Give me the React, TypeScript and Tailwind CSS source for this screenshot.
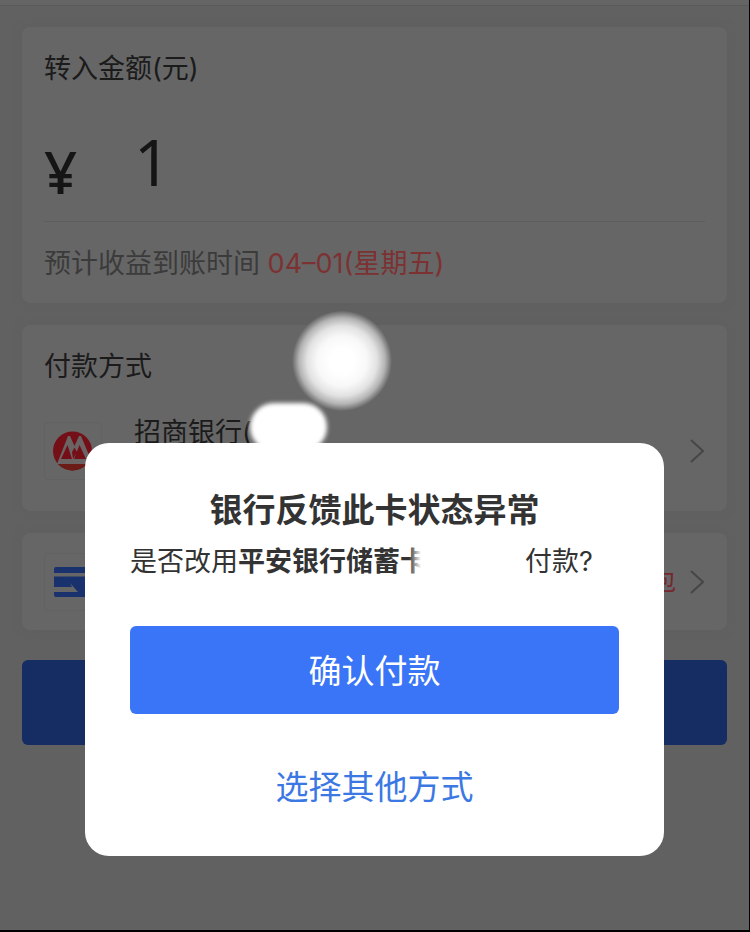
import { type ReactNode } from "react";

interface CardProps {
  className?: string;
  children: ReactNode;
}

function Card({ className = "", children }: CardProps) {
  return (
    <section className={`rounded-lg bg-[#666666] px-[22px] shadow-[0_0_8px_#5f5f5f] ${className}`}>
      {children}
    </section>
  );
}

function Chevron() {
  return (
    <svg viewBox="0 0 16 26" className="h-[26px] w-4 shrink-0" fill="none" stroke="#464646" strokeWidth="2">
      <path d="M2 2 L14 13 L2 24" />
    </svg>
  );
}

function MerchantsLogo() {
  return (
    <svg viewBox="0 0 40 40" className="size-10">
      <circle cx="19.5" cy="20" r="19.5" fill="#740f18" />
      <path d="M4 33 L15 5 H17 L21.5 15 L26 5 H28 L38 29 L37 33 Z" fill="#6a6464" />
      <path d="M8 28 L14.5 14 L19 28 Z M21 28 L26.5 14 L33 28 Z M19 21 L21.5 16.5 L24 21 L20 28 Z" fill="#740f18" />
      <path d="M5 33 H34 A19.5 19.5 0 0 1 5 33 Z" fill="#6b1c16" />
    </svg>
  );
}

function CardLogo() {
  return (
    <svg viewBox="0 0 38 30" className="h-[30px] w-[38px]">
      <rect width="38" height="30" rx="2" fill="#19316d" />
      <path d="M0 6 H38 V9.5 H0 Z M0 20 H18 L16 16 L24 25 H0 Z" fill="#666666" />
    </svg>
  );
}

function LogoBox({ children }: { children: ReactNode }) {
  return (
    <div className="flex size-[58px] shrink-0 items-center justify-center rounded border border-[#626262]">
      {children}
    </div>
  );
}

export default function App() {
  return (
    <div className="relative min-h-screen overflow-hidden border-r border-b-2 border-black bg-[#616161] font-['Inter','Noto_Sans_CJK_SC',sans-serif] text-[27px] leading-10 text-[#1b1b1b]">
      <div className="h-[6px] border-b border-[#5a5a5a] bg-[#656565]" />

      <main className="flex flex-col gap-[22px] px-[22px] pt-[21px]">
        <Card className="pt-[22px] pb-[19px]">
          <label htmlFor="amount" className="block">转入金额(元)</label>
          <div className="mt-8 flex h-[101px] items-start border-b border-[#5d5d5d] font-['Noto_Sans','Noto_Sans_CJK_SC',sans-serif]">
            <span className="mt-4 w-[90px] text-[58px] leading-[70px] font-medium text-[#151515]">¥</span>
            <input
              id="amount"
              defaultValue="1"
              inputMode="decimal"
              className="h-20 min-w-0 flex-1 bg-transparent text-[64px] text-[#151515] outline-none"
            />
          </div>
          <p className="mt-[22px] text-[#3b3b3b]">
            预计收益到账时间 <span className="text-[#7c3232]">04–01(星期五)</span>
          </p>
        </Card>

        <Card className="pt-[22px] pb-[31px]">
          <h2>付款方式</h2>
          <div className="mt-[35px] flex items-center">
            <LogoBox>
              <MerchantsLogo />
            </LogoBox>
            <span className="-mt-[9px] ml-8 flex-1 self-start">招商银行(</span>
            <Chevron />
          </div>
        </Card>

        <Card className="flex h-[97px] items-center">
          <LogoBox>
            <CardLogo />
          </LogoBox>
          <span className="mr-[13px] flex-1 text-right text-2xl text-[#75272d]">包</span>
          <Chevron />
        </Card>

        <button type="button" aria-label="确认" className="mt-2 h-[85px] rounded-md bg-[#152d62]" />
      </main>

      {/* smudges over the card number */}
      <div className="absolute top-[311px] left-[292px] size-[100px] rounded-full bg-[radial-gradient(circle_closest-side,#ffffff_25%,#f8f8f8_50%,#e2e2e2_70%,#b4b4b4_86%,#666666_100%)]" />
      <div className="absolute top-[403px] left-[250px] h-[48px] w-[77px] rounded-[24px] bg-white blur-[2px]" />

      <div
        role="dialog"
        aria-labelledby="dialog-title"
        className="absolute inset-x-[85px] top-[443px] rounded-[24px] bg-white px-[45px] pt-[47px] pb-[43px] text-[#333333]"
      >
        <h1 id="dialog-title" className="text-center text-[33px] font-bold">银行反馈此卡状态异常</h1>
        <p className="mt-3 flex whitespace-nowrap">
          是否改用<strong className="font-bold">平安银行储蓄卡</strong>
          <span className="z-10 -ml-[18px] w-[116px] bg-[linear-gradient(90deg,transparent,#ffffff_12px,#ffffff_104px,transparent)]" />
          <span>付款?</span>
        </p>
        <button type="button" className="mt-[44px] h-[88px] w-full rounded-md bg-[#3975f6] pt-0.5 text-[33px] text-white">
          确认付款
        </button>
        <button type="button" className="mt-[47px] h-[52px] w-full text-[33px] text-[#3c78e4]">
          选择其他方式
        </button>
      </div>
    </div>
  );
}
